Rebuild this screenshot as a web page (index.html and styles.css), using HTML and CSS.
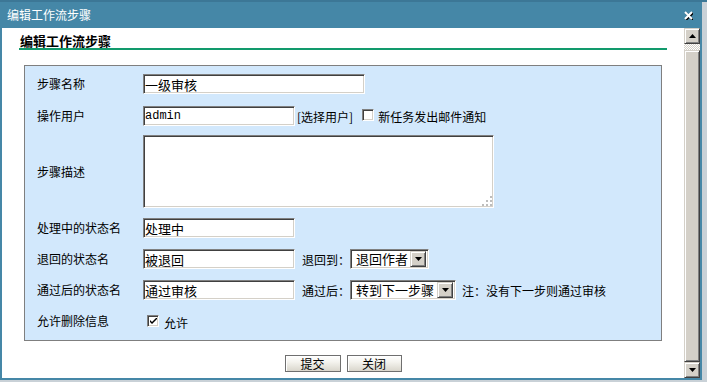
FILE: index.html
```html
<!DOCTYPE html>
<html lang="zh-CN">
<head>
<meta charset="utf-8">
<title>编辑工作流步骤</title>
<link rel="stylesheet" href="styles.css">
</head>
<body>
<div class="backdrop"></div>
<div class="dialog">
  <div class="titlebar">
    <span class="title">编辑工作流步骤</span>
    <svg class="close" width="9" height="9" viewBox="0 0 9 9">
      <path d="M1.5 1.5 L8.5 8.5 M8.5 1.5 L1.5 8.5" stroke="#000" stroke-width="2" fill="none" transform="translate(0.5 0.5)"/>
      <path d="M1 1 L8 8 M8 1 L1 8" stroke="#fff" stroke-width="2" fill="none"/>
    </svg>
  </div>
  <div class="dlg-body">
    <div class="content">
      <h2 class="heading">编辑工作流步骤</h2>
      <div class="panel">
        <div class="row r1">
          <span class="lbl">步骤名称</span>
          <input class="field w-long" type="text" value="一级审核">
        </div>
        <div class="row r2">
          <span class="lbl">操作用户</span>
          <input class="field w-short mono" type="text" value="admin">
          <span class="link">[选择用户]</span>
          <span class="cb cb-mail"></span>
          <span class="cb-text">新任务发出邮件通知</span>
        </div>
        <div class="row r3">
          <span class="lbl">步骤描述</span>
          <div class="ta-wrap">
            <textarea class="field ta"></textarea>
            <svg class="grip" width="10" height="10" viewBox="0 0 10 10">
              <rect x="8" y="0" width="2" height="2"/>
              <rect x="4" y="4" width="2" height="2"/>
              <rect x="8" y="4" width="2" height="2"/>
              <rect x="0" y="8" width="2" height="2"/>
              <rect x="4" y="8" width="2" height="2"/>
              <rect x="8" y="8" width="2" height="2"/>
            </svg>
          </div>
        </div>
        <div class="row r4">
          <span class="lbl">处理中的状态名</span>
          <input class="field w-short" type="text" value="处理中">
        </div>
        <div class="row r5">
          <span class="lbl">退回的状态名</span>
          <input class="field w-short" type="text" value="被退回">
          <span class="sub-lbl">退回到：</span>
          <span class="select sel-back"><span class="sel-text">退回作者</span><span class="sel-btn"><svg width="7" height="4" viewBox="0 0 7 4"><path d="M0 0 H7 L3.5 4 Z" fill="#000"/></svg></span></span>
        </div>
        <div class="row r6">
          <span class="lbl">通过后的状态名</span>
          <input class="field w-short" type="text" value="通过审核">
          <span class="sub-lbl">通过后：</span>
          <span class="select sel-next"><span class="sel-text">转到下一步骤</span><span class="sel-btn"><svg width="7" height="4" viewBox="0 0 7 4"><path d="M0 0 H7 L3.5 4 Z" fill="#000"/></svg></span></span>
          <span class="note">注：没有下一步则通过审核</span>
        </div>
        <div class="row r7">
          <span class="lbl">允许删除信息</span>
          <span class="cb cb-allow checked"><svg width="7" height="7" viewBox="0 0 7 7"><path d="M0 2 L0 4 L2 6 L7 1 L7 -1 L2 4 Z" fill="#000"/></svg></span>
          <span class="cb-text allow">允许</span>
        </div>
      </div>
      <div class="actions">
        <button class="btn btn-submit" type="button">提交</button>
        <button class="btn btn-close" type="button">关闭</button>
      </div>
    </div>
    <div class="scrollbar">
      <div class="sb-btn"><svg width="7" height="4" viewBox="0 0 7 4"><path d="M0 4 H7 L3.5 0 Z" fill="#000"/></svg></div>
      <div class="sb-track"></div>
      <div class="sb-thumb"></div>
      <div class="sb-btn"><svg width="7" height="4" viewBox="0 0 7 4"><path d="M0 0 H7 L3.5 4 Z" fill="#000"/></svg></div>
    </div>
  </div>
</div>
</body>
</html>
```

FILE: styles.css
```css
* { box-sizing: border-box; }

html, body {
  margin: 0;
  padding: 0;
}

body {
  width: 707px;
  height: 382px;
  overflow: hidden;
  background: #c9d1d7;
  font-family: "Noto Sans CJK SC", "Liberation Sans", sans-serif;
  font-size: 12px;
  color: #000;
}

.backdrop {
  height: 2px;
  background: #3c7796;
}

.dialog {
  width: 702px;
  border: 2px solid #4587a7;
  border-top: 0;
}

.titlebar {
  height: 26px;
  background: #4587a7;
  display: flex;
  align-items: center;
  justify-content: space-between;
  padding: 0 7px 0 5px;
  color: #fff;
  font-size: 12px;
}

.title {
  line-height: 16px;
}

.close {
  display: block;
  margin-top: 1px;
}

.dlg-body {
  display: flex;
  height: 350px;
}

.content {
  width: 682px;
  background: #fff;
  padding: 0 17px;
}

.heading {
  margin: 0;
  padding: 5px 0 0 1px;
  line-height: 15px;
  font-size: 13px;
  font-weight: bold;
  border-bottom: 2px solid #129a6c;
}

.panel {
  margin: 15px 5px 0;
  border: 1px solid #7f7f7f;
  background: #d2e8fc;
  padding: 0 0 9px 12px;
}

.row {
  display: flex;
  align-items: center;
  height: 20px;
}

.r1 { margin-top: 8px; }
.r2 { margin-top: 12px; }
.r3 { margin-top: 9px; height: 73px; }
.r4 { margin-top: 10px; }
.r5 { margin-top: 11px; }
.r6 { margin-top: 11px; }
.r7 { margin-top: 11px; }

.lbl {
  flex: none;
  width: 106px;
  line-height: 16px;
}

.field {
  height: 20px;
  margin: 0;
  padding: 0 1px;
  border: 1px solid;
  border-color: #808080 #ffffff #ffffff #808080;
  box-shadow: inset 1px 1px 0 #404040, inset -1px -1px 0 #d4d0c8;
  background: #fff;
  font-family: "Noto Sans CJK SC", "Liberation Sans", sans-serif;
  font-size: 13px;
  color: #000;
  outline: none;
}

.w-long { width: 222px; }
.w-short { width: 152px; }

.mono {
  font-family: "Liberation Mono", "DejaVu Sans Mono", monospace;
  font-size: 12px;
}

.link {
  margin-left: 2px;
}

.cb {
  flex: none;
  width: 12px;
  height: 12px;
  border: 1px solid;
  border-color: #808080 #ffffff #ffffff #808080;
  box-shadow: inset 1px 1px 0 #404040, inset -1px -1px 0 #d4d0c8;
  background: #fff;
  display: flex;
  align-items: center;
  justify-content: center;
}

.cb svg { display: block; }

.cb-mail {
  margin-left: 9px;
  margin-top: -3px;
}

.cb-text {
  margin-left: 4px;
}

.cb-allow {
  margin-left: 4px;
}

.cb-text.allow {
  margin-left: 5px;
  margin-top: 3px;
}

.ta-wrap {
  position: relative;
  width: 351px;
  height: 73px;
}

.ta {
  display: block;
  width: 351px;
  height: 73px;
  resize: none;
}

.grip {
  position: absolute;
  right: 2px;
  bottom: 2px;
  fill: #bdbdbd;
}

.sub-lbl {
  margin-left: 7px;
  width: 48px;
  flex: none;
}

.select {
  flex: none;
  display: flex;
  align-items: center;
  justify-content: space-between;
  height: 20px;
  padding: 2px 2px 2px 5px;
  border: 1px solid;
  border-color: #808080 #ffffff #ffffff #808080;
  box-shadow: inset 1px 1px 0 #404040, inset -1px -1px 0 #d4d0c8;
  background: #fff;
  font-size: 13px;
}

.sel-back { width: 79px; }
.sel-next { width: 106px; }

.sel-text {
  line-height: 16px;
}

.sel-btn {
  flex: none;
  width: 16px;
  height: 16px;
  background: #d4d0c8;
  border: 1px solid;
  border-color: #d4d0c8 #404040 #404040 #d4d0c8;
  box-shadow: inset 1px 1px 0 #fff, inset -1px -1px 0 #808080;
  display: flex;
  align-items: center;
  justify-content: center;
}

.sel-btn svg { display: block; }

.note {
  margin-left: 6px;
}

.actions {
  display: flex;
  justify-content: center;
  gap: 6px;
  margin-top: 14px;
}

.btn {
  height: 17px;
  margin: 0;
  padding: 0;
  border: 1px solid #6f6f6f;
  background: linear-gradient(#ffffff, #f4f3ee 40%, #d9d6cc);
  box-shadow: inset 1px 1px 0 #fff;
  font-family: "Noto Sans CJK SC", "Liberation Sans", sans-serif;
  font-size: 12px;
  line-height: 15px;
  color: #000;
}

.btn-submit { width: 56px; }
.btn-close { width: 55px; }

.scrollbar {
  width: 16px;
  display: flex;
  flex-direction: column;
}

.sb-btn,
.sb-thumb {
  background: #d4d0c8;
  border: 1px solid;
  border-color: #d4d0c8 #404040 #404040 #d4d0c8;
  box-shadow: inset 1px 1px 0 #fff, inset -1px -1px 0 #808080;
}

.sb-btn {
  height: 16px;
  display: flex;
  align-items: center;
  justify-content: center;
}

.sb-btn svg { display: block; }

.sb-track {
  height: 6px;
  background: repeating-conic-gradient(#d4d0c8 0 25%, #ffffff 0 50%) 0 0 / 2px 2px;
}

.sb-thumb {
  height: 312px;
}
```
